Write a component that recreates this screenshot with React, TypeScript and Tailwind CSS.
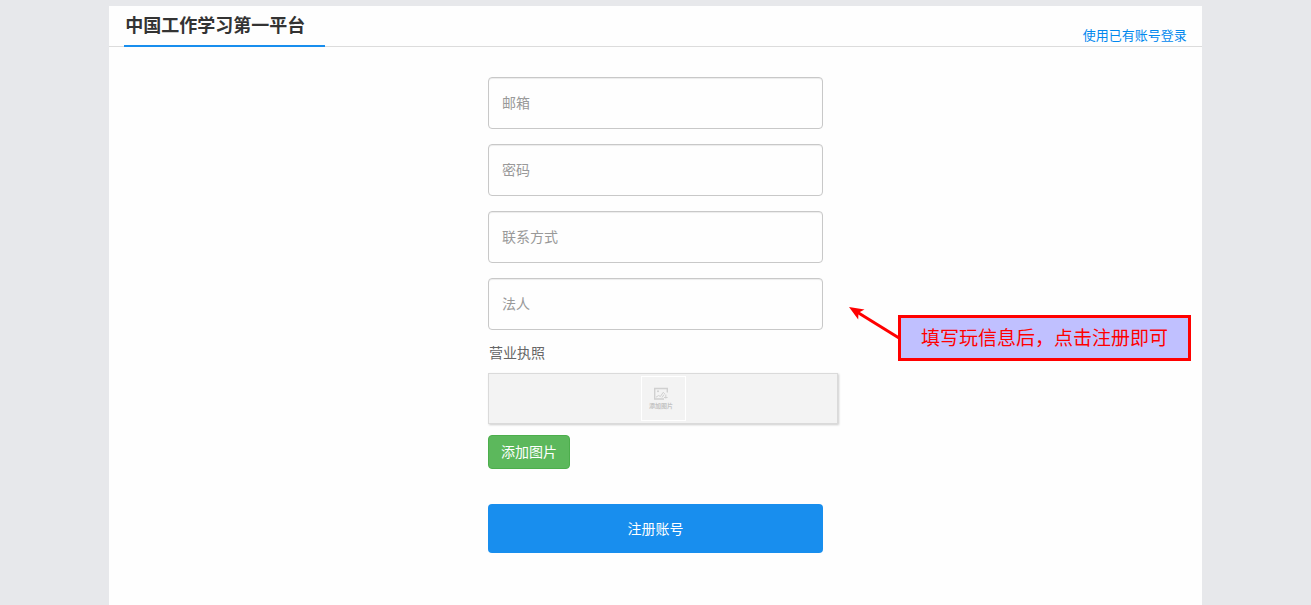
import React, { useRef, useState } from 'react';

const fields = [
    { id: 'email', type: 'email', label: '邮箱' },
    { id: 'password', type: 'password', label: '密码' },
    { id: 'contact', type: 'text', label: '联系方式' },
    { id: 'legalPerson', type: 'text', label: '法人' },
];

const Header = () => (
    <header className="flex h-[41px] items-end justify-between border-b border-[#dcdcdc] px-[15px]">
        <h1 className="-mb-px h-10 w-[201px] border-b-2 border-[#188eee] pl-px text-lg leading-[34px] font-bold text-[#333]">
            中国工作学习第一平台
        </h1>
        <a href="#login" className="text-[13px] leading-[22px] text-[#0088ee] hover:underline">
            使用已有账号登录
        </a>
    </header>
);

const ImagePlaceholder = () => (
    <div className="flex h-[45px] w-[45px] flex-col items-center border border-white pt-2.5 pr-1 text-[#d0d0d0]">
        <svg width="14" height="13" viewBox="0 0 14 13" className="shrink-0" fill="none" stroke="currentColor" aria-hidden="true">
            <path d="M13.3 5.5V1.5H.7v10.5h9.3" strokeWidth="1.4" />
            <path d="M2 10.2l2.6-1.7 1.8 1 2.8-4.2 1.6 1.5M8 10.5l2-3" />
            <path d="M11.8 7.5v4M10 10.5h3.6" />
            <circle cx="4" cy="4.3" r="1" fill="currentColor" stroke="none" />
        </svg>
        <span className="text-[6px] leading-3 font-bold whitespace-nowrap text-[#c4c4c4]">添加图片</span>
    </div>
);

const Callout = () => (
    <div className="absolute top-[230px] left-[361px] flex">
        <svg width="50" height="54" viewBox="0 0 50 54" className="-mr-px shrink-0" aria-hidden="true">
            <path d="M50 31L8 5" stroke="#f00" strokeWidth="3" />
            <path d="M0 0L15.5 2.5L9.5 5.8L9.2 12.5Z" fill="#f00" />
        </svg>
        <p className="mt-2 flex h-[46px] w-[293px] items-center border-3 border-[#f00] bg-[#c0c0ff] pb-0.5 pl-5 text-[19px] whitespace-nowrap text-[#f00]">
            填写玩信息后，点击注册即可
        </p>
    </div>
);

export default function App() {
    const fileRef = useRef<HTMLInputElement>(null);
    const [values, setValues] = useState<Record<string, string>>({});

    return (
        <div className="flex min-h-screen justify-center bg-[#e7e8eb] pt-1.5 font-['Noto_Sans_CJK_SC',sans-serif]">
            <main className="w-5/6 bg-[#fefefe]">
                <Header />
                <form
                    className="relative mx-auto mt-[30px] w-[335px] text-sm"
                    onSubmit={(e) => e.preventDefault()}
                >
                    <div className="flex flex-col gap-[15px]">
                        {fields.map((field) => (
                            <input
                                key={field.id}
                                id={field.id}
                                type={field.type}
                                aria-label={field.label}
                                placeholder={field.label}
                                value={values[field.id] ?? ''}
                                onChange={(e) => setValues({ ...values, [field.id]: e.target.value })}
                                className="h-[52px] w-full rounded border border-[#c8c8c8] bg-[#fefefe] px-[13px] pb-0.5 text-[#555] shadow-[inset_0_1px_1px_rgba(0,0,0,0.075)] placeholder:text-[#999] focus:border-[#188eee] focus:outline-none"
                            />
                        ))}
                    </div>

                    <label htmlFor="license" className="mt-3 block pl-px leading-5 text-[#666]">
                        营业执照
                    </label>
                    <input ref={fileRef} id="license" type="file" accept="image/*" className="hidden" />
                    <div className="mt-[11px] -mr-[15px] flex h-[51px] items-center justify-center border border-[#dadada] bg-[#f3f3f3] shadow-[1px_1px_2px_rgba(0,0,0,0.2)]">
                        <ImagePlaceholder />
                    </div>
                    <button
                        type="button"
                        onClick={() => fileRef.current?.click()}
                        className="mt-[11px] block h-[34px] rounded border border-[#4cae4c] bg-[#5cb85c] px-3 pb-0.5 text-white hover:bg-[#449d44]"
                    >
                        添加图片
                    </button>
                    <button
                        type="submit"
                        className="mt-[35px] block h-[49px] w-full rounded bg-[#188eee] pb-0.5 text-white hover:bg-[#107fd8]"
                    >
                        注册账号
                    </button>
                    <Callout />
                </form>
            </main>
        </div>
    );
}
